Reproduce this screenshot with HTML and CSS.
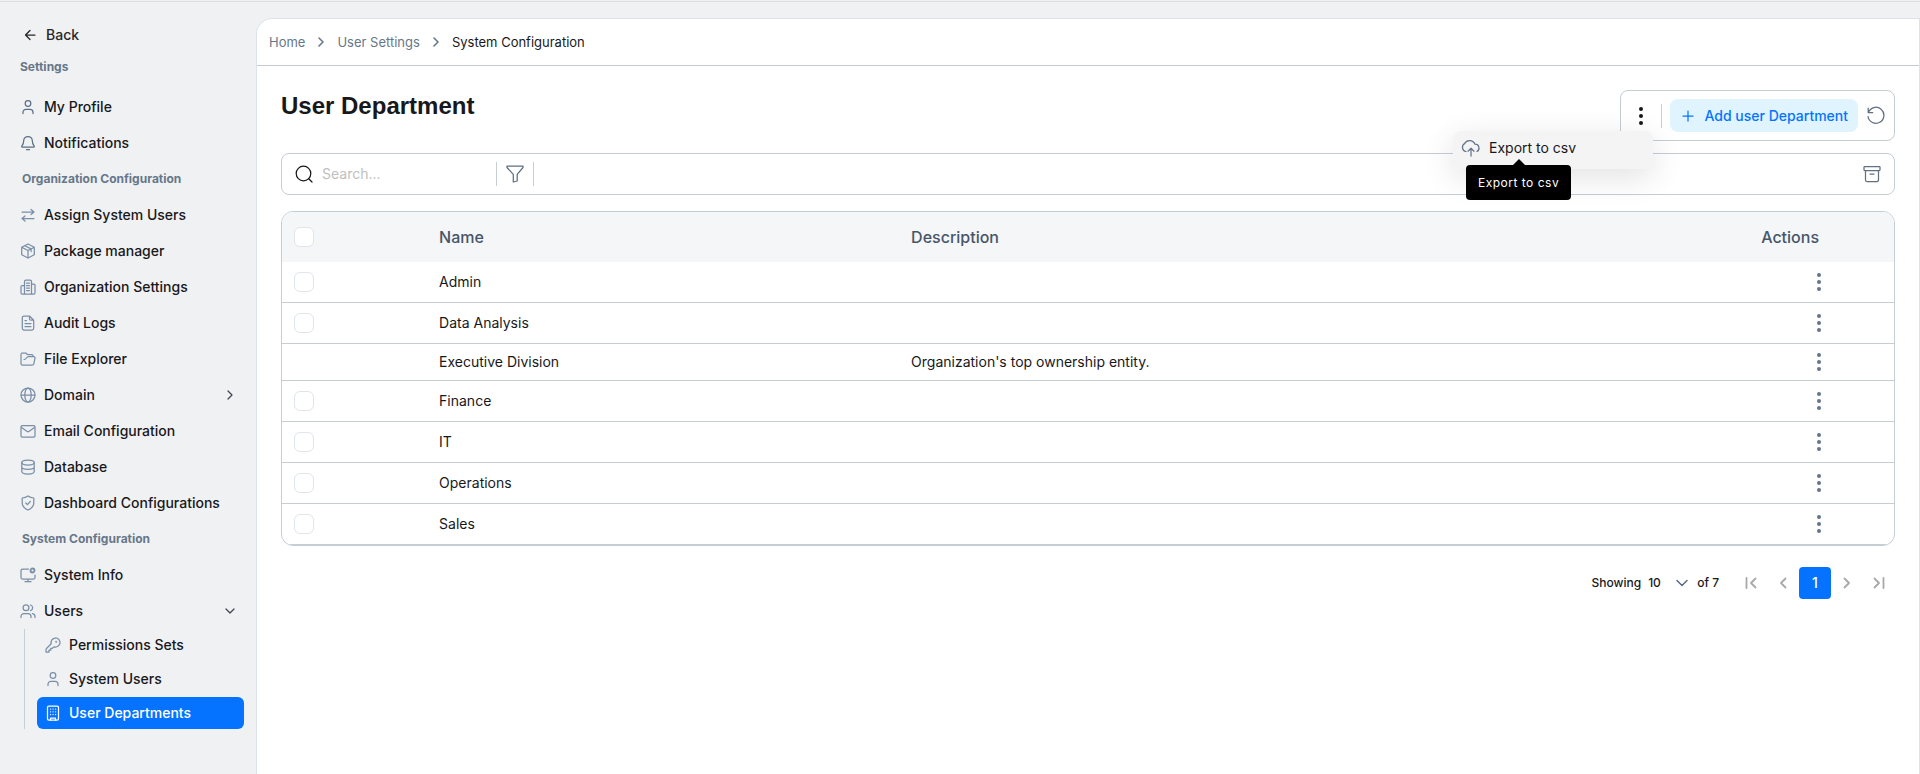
FILE: index.html
```html
<!DOCTYPE html>
<html lang="en">
<head>
    <meta charset="UTF-8">
    <meta name="viewport" content="width=device-width, initial-scale=1.0">
    <title>User Department</title>
    <link rel="stylesheet" href="styles.css">
</head>
<body>
    <!-- Shared shapes -->
    <svg class="sprite" aria-hidden="true">
        <symbol id="dots" viewBox="0 0 20 20"><circle cx="10" cy="3" r="2"/><circle cx="10" cy="10" r="2"/><circle cx="10" cy="17" r="2"/></symbol>
        <symbol id="user" viewBox="0 0 16 16"><circle cx="8" cy="4.5" r="2.8"/><path d="M3 14.5v-1.2a3 3 0 0 1 3-3h4a3 3 0 0 1 3 3v1.2"/></symbol>
        <symbol id="chevron" viewBox="0 0 16 16"><path d="M6 4l4 4-4 4"/></symbol>
    </svg>

    <div class="layout">
        <aside class="sidebar">
            <a class="back" href="#">
                <svg class="icon" viewBox="0 0 16 16"><path d="M13 8H3.500M8 3.500L3.500 8 8 12.500"/></svg>
                Back
            </a>
            <nav>
                <h2 class="nav-title first">Settings</h2>
                <a class="nav-link dark" href="#">
                    <svg class="icon"><use href="#user"/></svg>
                    My Profile
                </a>
                <a class="nav-link dark" href="#">
                    <svg class="icon" viewBox="0 0 16 16"><path d="M8 1.500a4.300 4.300 0 0 0-4.300 4.300c0 3-1 4.200-1.900 5.300-.3.500-.1 1 .5 1h11.400c.6 0 .8-.5.5-1-.9-1.100-1.900-2.300-1.900-5.300A4.300 4.300 0 0 0 8 1.500zM6.500 14.500h3"/></svg>
                    Notifications
                </a>

                <h2 class="nav-title">Organization Configuration</h2>
                <a class="nav-link" href="#">
                    <svg class="icon" viewBox="0 0 16 16"><path d="M2 5h12M11 2.500L14 5l-3 2.500M14 11.500H2M5 9l-3 2.500L5 14"/></svg>
                    Assign System Users
                </a>
                <a class="nav-link" href="#">
                    <svg class="icon" viewBox="0 0 16 16"><path d="M8 1l6.300 3.200v7.600L8 15l-6.300-3.200V4.200zM1.700 4.200L8 7.500l6.300-3.300M8 7.500V15M4.800 2.700l6.300 3.200v2.600"/></svg>
                    Package manager
                </a>
                <a class="nav-link" href="#">
                    <svg class="icon" viewBox="0 0 16 16"><path d="M4.500 15V2.500A1.500 1.500 0 0 1 6 1h4a1.500 1.500 0 0 1 1.500 1.500V15M4.500 6.500H2.300A1.300 1.300 0 0 0 1 7.800v5.900A1.300 1.300 0 0 0 2.300 15h11.400a1.300 1.300 0 0 0 1.300-1.300V6.300A1.300 1.300 0 0 0 13.700 5h-2.200M6.500 4h3M6.500 6.500h3M6.500 9h3M6.500 11.500h3"/></svg>
                    Organization Settings
                </a>
                <a class="nav-link" href="#">
                    <svg class="icon" viewBox="0 0 16 16"><path d="M9.500 1H4a1.700 1.700 0 0 0-1.700 1.700v10.600A1.700 1.700 0 0 0 4 15h8a1.700 1.700 0 0 0 1.700-1.700V5.200zM9.500 1v2.700a1.500 1.500 0 0 0 1.500 1.500h2.700M5 5.500h1.500M5 8.500h6M5 11.500h6"/></svg>
                    Audit Logs
                </a>
                <a class="nav-link" href="#">
                    <svg class="icon" viewBox="0 0 16 16"><path d="M13 5.500V5a1.300 1.300 0 0 0-1.300-1.300H7.500L6 2H2.500A1.400 1.400 0 0 0 1 3.400v9A1.600 1.600 0 0 0 2.600 14h9.800a1.500 1.500 0 0 0 1.400-1.100L15 7.200a1.200 1.200 0 0 0-1.200-1.600H8.500C6 5.600 6.800 8.500 4 8.500"/></svg>
                    File Explorer
                </a>
                <a class="nav-link" href="#">
                    <svg class="icon" viewBox="0 0 16 16"><circle cx="8" cy="8" r="7"/><ellipse cx="8" cy="8" rx="3.200" ry="7"/><path d="M1 8h14"/></svg>
                    Domain
                    <svg class="icon arrow"><use href="#chevron"/></svg>
                </a>
                <a class="nav-link" href="#">
                    <svg class="icon" viewBox="0 0 16 16"><rect x="1" y="2.500" width="14" height="11.500" rx="1.300"/><path d="M1.500 4.500l5.700 4a1.500 1.500 0 0 0 1.600 0l5.700-4"/></svg>
                    Email Configuration
                </a>
                <a class="nav-link" href="#">
                    <svg class="icon" viewBox="0 0 16 16"><ellipse cx="8" cy="3.500" rx="6.200" ry="2.500"/><path d="M1.800 3.500v9C1.800 14 4.500 15 8 15s6.200-1 6.200-2.500v-9M1.800 8c0 1.500 2.700 2.300 6.200 2.300s6.200-.8 6.200-2.300"/></svg>
                    Database
                </a>
                <a class="nav-link" href="#">
                    <svg class="icon" viewBox="0 0 16 16"><path d="M8 1c1.700 1.300 3.700 1.900 5.800 2v4.500c0 3.600-2.200 6-5.800 7.500-3.600-1.500-5.800-3.900-5.800-7.500V3C4.300 2.900 6.300 2.300 8 1zM5.800 8l1.600 1.600L10.300 6.500"/></svg>
                    Dashboard Configurations
                </a>

                <h2 class="nav-title">System Configuration</h2>
                <a class="nav-link" href="#">
                    <svg class="icon" viewBox="0 0 16 16"><path d="M8.500 2H2.500A1.500 1.500 0 0 0 1 3.500v7A1.500 1.500 0 0 0 2.500 12h11a1.500 1.500 0 0 0 1.500-1.500V8M8 12v2.700M5 14.700h6"/><circle cx="12.500" cy="3.500" r="2" stroke-width="1.800"/></svg>
                    System Info
                </a>
                <a class="nav-link" href="#">
                    <svg class="icon" viewBox="0 0 16 16"><circle cx="6" cy="4.800" r="2.900"/><path d="M1 14.500v-1a3 3 0 0 1 3-3h4a3 3 0 0 1 3 3v1M10.500 2a2.900 2.900 0 0 1 0 5.600M12.500 10.700a3 3 0 0 1 2.500 3v.8"/></svg>
                    Users
                    <svg class="icon arrow down"><use href="#chevron"/></svg>
                </a>
                <div class="subnav">
                    <a class="nav-link" href="#">
                        <svg class="icon" viewBox="0 0 16 16"><path d="M10.500 1a4.500 4.500 0 0 0-4.300 5.800L1.500 11.500a1.500 1.500 0 0 0-.5 1V15h3v-1.800h1.800v-1.800H7L9.200 9.800A4.500 4.500 0 1 0 10.500 1z"/><circle cx="11.200" cy="4.800" r=".4"/></svg>
                        Permissions Sets
                    </a>
                    <a class="nav-link" href="#">
                        <svg class="icon"><use href="#user"/></svg>
                        System Users
                    </a>
                    <a class="nav-link active" href="#">
                        <svg class="icon" viewBox="0 0 16 16"><rect x="2.500" y="1" width="11" height="14" rx="1.300"/><path d="M5.500 15v-2h5v2"/><path d="M5.500 4h.1M8 4h.1M10.500 4h.1M5.500 6.800h.1M8 6.800h.1M10.500 6.800h.1M5.500 9.500h.1M8 9.500h.1M10.500 9.500h.1"/></svg>
                        User Departments
                    </a>
                </div>
            </nav>
        </aside>

        <main class="content">
            <nav class="breadcrumb" aria-label="Breadcrumb">
                <a href="#">Home</a>
                <svg class="icon"><use href="#chevron"/></svg>
                <a href="#">User Settings</a>
                <svg class="icon"><use href="#chevron"/></svg>
                <span>System Configuration</span>
            </nav>

            <div class="page">
                <div class="page-head">
                    <h1>User Department</h1>
                    <div class="toolbar">
                        <button class="more" aria-label="More"><svg><use href="#dots"/></svg></button>
                        <span class="divider"></span>
                        <button class="add-button">
                            <svg viewBox="0 0 12 12"><path d="M6 1v10M1 6h10"/></svg>
                            Add user Department
                        </button>
                        <button class="refresh" aria-label="Refresh">
                            <svg viewBox="0 0 20 20"><path d="M2.200 2v4.500h4.500M2.400 6.500A8 8 0 1 1 2 10.500"/></svg>
                        </button>
                        <div class="menu">
                            <button class="menu-item">
                                <svg viewBox="0 0 20 18"><path d="M5 12.500A4.300 4.300 0 0 1 3.500 4.600 5.800 5.800 0 0 1 14 5.200a3.900 3.900 0 0 1 2 7.300M10 17V9.500M7 12.200l3-3 3 3"/></svg>
                                Export to csv
                            </button>
                            <div class="tooltip" role="tooltip">Export to csv</div>
                        </div>
                    </div>
                </div>

                <div class="search-bar">
                    <svg class="search-icon" viewBox="0 0 18 18"><circle cx="8.500" cy="8.500" r="7.300"/><path d="M13.700 13.700L17 17"/></svg>
                    <input type="text" placeholder="Search..." aria-label="Search">
                    <span class="divider"></span>
                    <button aria-label="Filter">
                        <svg viewBox="0 0 18 18"><path d="M1 1h16v1.500l-5.800 6.800V16l-3.900 1V9.300L1 2.500z"/></svg>
                    </button>
                    <span class="divider"></span>
                    <button class="archive" aria-label="Archive">
                        <svg viewBox="0 0 18 18"><rect x="1" y="1.500" width="16" height="4" rx=".8"/><path d="M2.500 5.500V15A1.500 1.500 0 0 0 4 16.500h10a1.500 1.500 0 0 0 1.500-1.500V5.500M7 9h4"/></svg>
                    </button>
                </div>

                <div class="table-wrap">
                    <table>
                        <thead>
                            <tr>
                                <th class="col-check"><input type="checkbox" aria-label="Select all"></th>
                                <th class="col-name">Name</th>
                                <th>Description</th>
                                <th class="col-actions">Actions</th>
                            </tr>
                        </thead>
                        <tbody>
                            <tr>
                                <td><input type="checkbox" aria-label="Select Admin"></td>
                                <td>Admin</td>
                                <td></td>
                                <td class="actions"><button aria-label="Actions for Admin"><svg><use href="#dots"/></svg></button></td>
                            </tr>
                            <tr>
                                <td><input type="checkbox" aria-label="Select Data Analysis"></td>
                                <td>Data Analysis</td>
                                <td></td>
                                <td class="actions"><button aria-label="Actions for Data Analysis"><svg><use href="#dots"/></svg></button></td>
                            </tr>
                            <tr class="locked">
                                <td></td>
                                <td>Executive Division</td>
                                <td>Organization's top ownership entity.</td>
                                <td class="actions"><button aria-label="Actions for Executive Division"><svg><use href="#dots"/></svg></button></td>
                            </tr>
                            <tr>
                                <td><input type="checkbox" aria-label="Select Finance"></td>
                                <td>Finance</td>
                                <td></td>
                                <td class="actions"><button aria-label="Actions for Finance"><svg><use href="#dots"/></svg></button></td>
                            </tr>
                            <tr>
                                <td><input type="checkbox" aria-label="Select IT"></td>
                                <td>IT</td>
                                <td></td>
                                <td class="actions"><button aria-label="Actions for IT"><svg><use href="#dots"/></svg></button></td>
                            </tr>
                            <tr>
                                <td><input type="checkbox" aria-label="Select Operations"></td>
                                <td>Operations</td>
                                <td></td>
                                <td class="actions"><button aria-label="Actions for Operations"><svg><use href="#dots"/></svg></button></td>
                            </tr>
                            <tr>
                                <td><input type="checkbox" aria-label="Select Sales"></td>
                                <td>Sales</td>
                                <td></td>
                                <td class="actions"><button aria-label="Actions for Sales"><svg><use href="#dots"/></svg></button></td>
                            </tr>
                        </tbody>
                    </table>
                </div>

                <div class="pagination">
                    <label for="page-size">Showing</label>
                    <div class="page-size">
                        <select id="page-size">
                            <option>10</option>
                            <option>25</option>
                            <option>50</option>
                        </select>
                        <svg viewBox="0 0 12 8"><path d="M1 1.500l5 5 5-5"/></svg>
                    </div>
                    <span>of 7</span>
                    <div class="pages">
                        <button aria-label="First page"><svg viewBox="0 0 12 12"><path d="M1.500 1v10M10.500 1.500L6 6l4.500 4.500"/></svg></button>
                        <button aria-label="Previous page"><svg viewBox="0 0 12 12"><path d="M8.500 1.500L4 6l4.500 4.500"/></svg></button>
                        <button class="current">1</button>
                        <button aria-label="Next page"><svg viewBox="0 0 12 12"><path d="M3.500 1.500L8 6l-4.500 4.500"/></svg></button>
                        <button aria-label="Last page"><svg viewBox="0 0 12 12"><path d="M10.500 1v10M1.500 1.500L6 6l-4.500 4.500"/></svg></button>
                    </div>
                </div>
            </div>
        </main>
    </div>
</body>
</html>
```
FILE: styles.css
```css
* {
    box-sizing: border-box;
}
body {
    margin: 0;
    font-family: Inter, "Liberation Sans", sans-serif;
    font-size: 14px;
    line-height: 20px;
    color: #18181b;
    background-color: #f0f1f3;
}
a {
    color: inherit;
    text-decoration: none;
}
button {
    display: flex;
    align-items: center;
    justify-content: center;
    padding: 0;
    border: 0;
    background: none;
    font: inherit;
    color: inherit;
    cursor: pointer;
}
svg {
    display: block;
    flex: none;
    fill: none;
    stroke: currentColor;
    stroke-width: 1.25;
    stroke-linecap: round;
    stroke-linejoin: round;
}
.sprite {
    position: absolute;
    width: 0;
    height: 0;
}
.icon {
    width: 16px;
    height: 16px;
}
.layout {
    display: flex;
    min-height: calc(100vh - 1px);
    margin-top: 1px;
    border-top: 1px solid #d9dfde;
}

/* Sidebar */
.sidebar {
    flex: none;
    width: 256px;
    padding: 17px 12px 0;
}
.back {
    display: flex;
    align-items: center;
    gap: 8px;
    height: 32px;
    padding-left: 10px;
    font-weight: 500;
    color: #27272a;
}
.nav-title {
    margin: 0;
    padding-left: 10px;
    font-size: 12px;
    line-height: 36px;
    font-weight: 700;
    color: #667789;
}
.nav-title.first {
    margin-bottom: 6px;
    padding-left: 8px;
    line-height: 32px;
}
.nav-link {
    display: flex;
    align-items: center;
    gap: 8px;
    height: 36px;
    padding: 0 6px 0 8px;
    font-weight: 500;
}
.nav-link .icon {
    color: #7a8fa6;
}
.nav-link.dark .icon {
    color: #5a6f85;
}
.nav-link .arrow {
    margin-left: auto;
    color: #3f4650;
}
.down {
    transform: rotate(90deg);
}
.subnav {
    display: flex;
    flex-direction: column;
    gap: 2px;
    margin-left: 12px;
    padding-left: 12px;
    border-left: 1px solid #c5cfd6;
}
.subnav .nav-link {
    height: 32px;
    border-radius: 6px;
}
.nav-link.active {
    background-color: #0573ff;
    color: #fff;
}
.nav-link.active .icon {
    color: #fff;
}

/* Content */
.content {
    flex: 1;
    min-width: 0;
    margin-top: 16px;
    border: 1px solid #dbe3e9;
    border-bottom: 0;
    border-top-left-radius: 16px;
    background-color: #fff;
}
.breadcrumb {
    display: flex;
    align-items: center;
    gap: 8px;
    height: 47px;
    padding: 0 12px;
    border-bottom: 1px solid #c5cad0;
    font-size: 13px;
    color: #667789;
}
.breadcrumb .icon {
    stroke-width: 1.6;
}
.breadcrumb span {
    color: #18181b;
}
.page {
    padding: 24px;
}
.page-head {
    display: flex;
    justify-content: space-between;
}
h1 {
    margin: 0;
    font-family: "Liberation Sans", Arial, sans-serif;
    font-size: 24px;
    line-height: 32px;
    font-weight: 700;
}
.toolbar {
    position: relative;
    display: flex;
    align-items: center;
    height: 51px;
    padding: 0 8px;
    border: 1px solid #c5ccd3;
    border-radius: 8px;
}
.divider {
    width: 1px;
    height: 24px;
    background-color: #c5cdd5;
}
.more {
    width: 24px;
    height: 24px;
    margin-right: 8px;
}
.more svg,
.actions svg {
    width: 20px;
    height: 20px;
    fill: currentColor;
    stroke: none;
}
.add-button {
    gap: 10px;
    height: 33px;
    margin-left: 8px;
    padding: 0 10px 0 12px;
    border-radius: 8px;
    background-color: #e0f4ff;
    color: #0573ff;
    font-weight: 500;
}
.add-button svg {
    width: 12px;
    height: 12px;
}
.refresh {
    margin-left: 8px;
    color: #5f6f80;
}
.refresh svg {
    width: 20px;
    height: 20px;
}
.menu {
    position: absolute;
    top: 40px;
    right: 241px;
    z-index: 1;
    width: 200px;
    border-radius: 8px;
    background-color: #f4f4f4;
    box-shadow: 0 8px 32px rgba(0, 0, 0, 0.12);
}
.menu-item {
    justify-content: flex-start;
    gap: 8px;
    width: 100%;
    height: 38px;
    padding: 0 8px 4px;
}
.menu-item svg {
    width: 20px;
    height: 18px;
    color: #64748b;
}
.tooltip {
    position: absolute;
    top: 34px;
    left: 13px;
    padding: 8px 12px;
    border-radius: 4px;
    background-color: #000;
    color: #fff;
    font-size: 12px;
    line-height: 19px;
    letter-spacing: 0.5px;
    white-space: nowrap;
}
.tooltip::before {
    content: "";
    position: absolute;
    left: 50%;
    bottom: 100%;
    margin-left: -6px;
    border: 6px solid transparent;
    border-top: 0;
    border-bottom-color: #000;
}

/* Search */
.search-bar {
    display: flex;
    align-items: center;
    height: 42px;
    margin-top: 12px;
    padding: 0 13px;
    border: 1px solid #c5cdd5;
    border-radius: 8px;
    color: #5f7081;
}
.search-bar svg {
    width: 18px;
    height: 18px;
}
.search-bar .search-icon {
    color: #18181b;
}
.search-bar input {
    width: 174px;
    margin-left: 9px;
    padding: 0;
    border: 0;
    outline: 0;
    background: none;
    font: inherit;
}
.search-bar input::placeholder {
    color: #bfbfbf;
}
.search-bar button {
    width: 36px;
    height: 24px;
}
.search-bar .archive {
    width: 18px;
    margin-left: auto;
}

/* Table */
.table-wrap {
    margin-top: 16px;
    border: 1px solid #c5cdd5;
    border-radius: 12px;
    overflow: hidden;
}
table {
    width: 100%;
    border-collapse: separate;
    border-spacing: 0;
    table-layout: fixed;
}
th,
td {
    padding: 0 12px;
    text-align: left;
}
th {
    height: 50px;
    background-color: #f4f6f8;
    font-size: 16px;
    font-weight: 500;
    color: #475569;
}
td {
    height: 41px;
    border-bottom: 1px solid #c5cdd5;
}
.locked td {
    height: 37px;
}
.col-check {
    width: 9%;
}
.col-name {
    width: 472px;
}
th.col-actions {
    width: 16%;
    padding-right: 75px;
    text-align: right;
}
.actions {
    padding-right: 65px;
}
.actions button {
    width: 20px;
    height: 20px;
    margin-left: auto;
    color: #64748b;
}
input[type="checkbox"] {
    display: block;
    appearance: none;
    width: 20px;
    height: 20px;
    margin: 0;
    border: 1px solid #dfe5ea;
    border-radius: 6px;
    background-color: #fff;
}

/* Pagination */
.pagination {
    display: flex;
    align-items: center;
    justify-content: flex-end;
    margin-top: 21px;
    font-size: 12px;
    font-weight: 500;
}
.page-size {
    display: flex;
    align-items: center;
    margin: 0 9px 0 7px;
}
.page-size select {
    width: 40px;
    margin-right: -12px;
    padding: 0;
    border: 0;
    appearance: none;
    background: none;
    font: inherit;
    color: inherit;
}
.page-size svg {
    width: 12px;
    height: 8px;
    color: #5a6b80;
    stroke-width: 1.5;
}
.pages {
    display: flex;
    margin-left: 16px;
}
.pages button {
    width: 32px;
    height: 32px;
    border-radius: 4px;
    color: #a8a8a8;
}
.pages svg {
    width: 12px;
    height: 12px;
    stroke-width: 1.8;
}
.pages .current {
    background-color: #0573ff;
    color: #fff;
    font-size: 14px;
}
```
